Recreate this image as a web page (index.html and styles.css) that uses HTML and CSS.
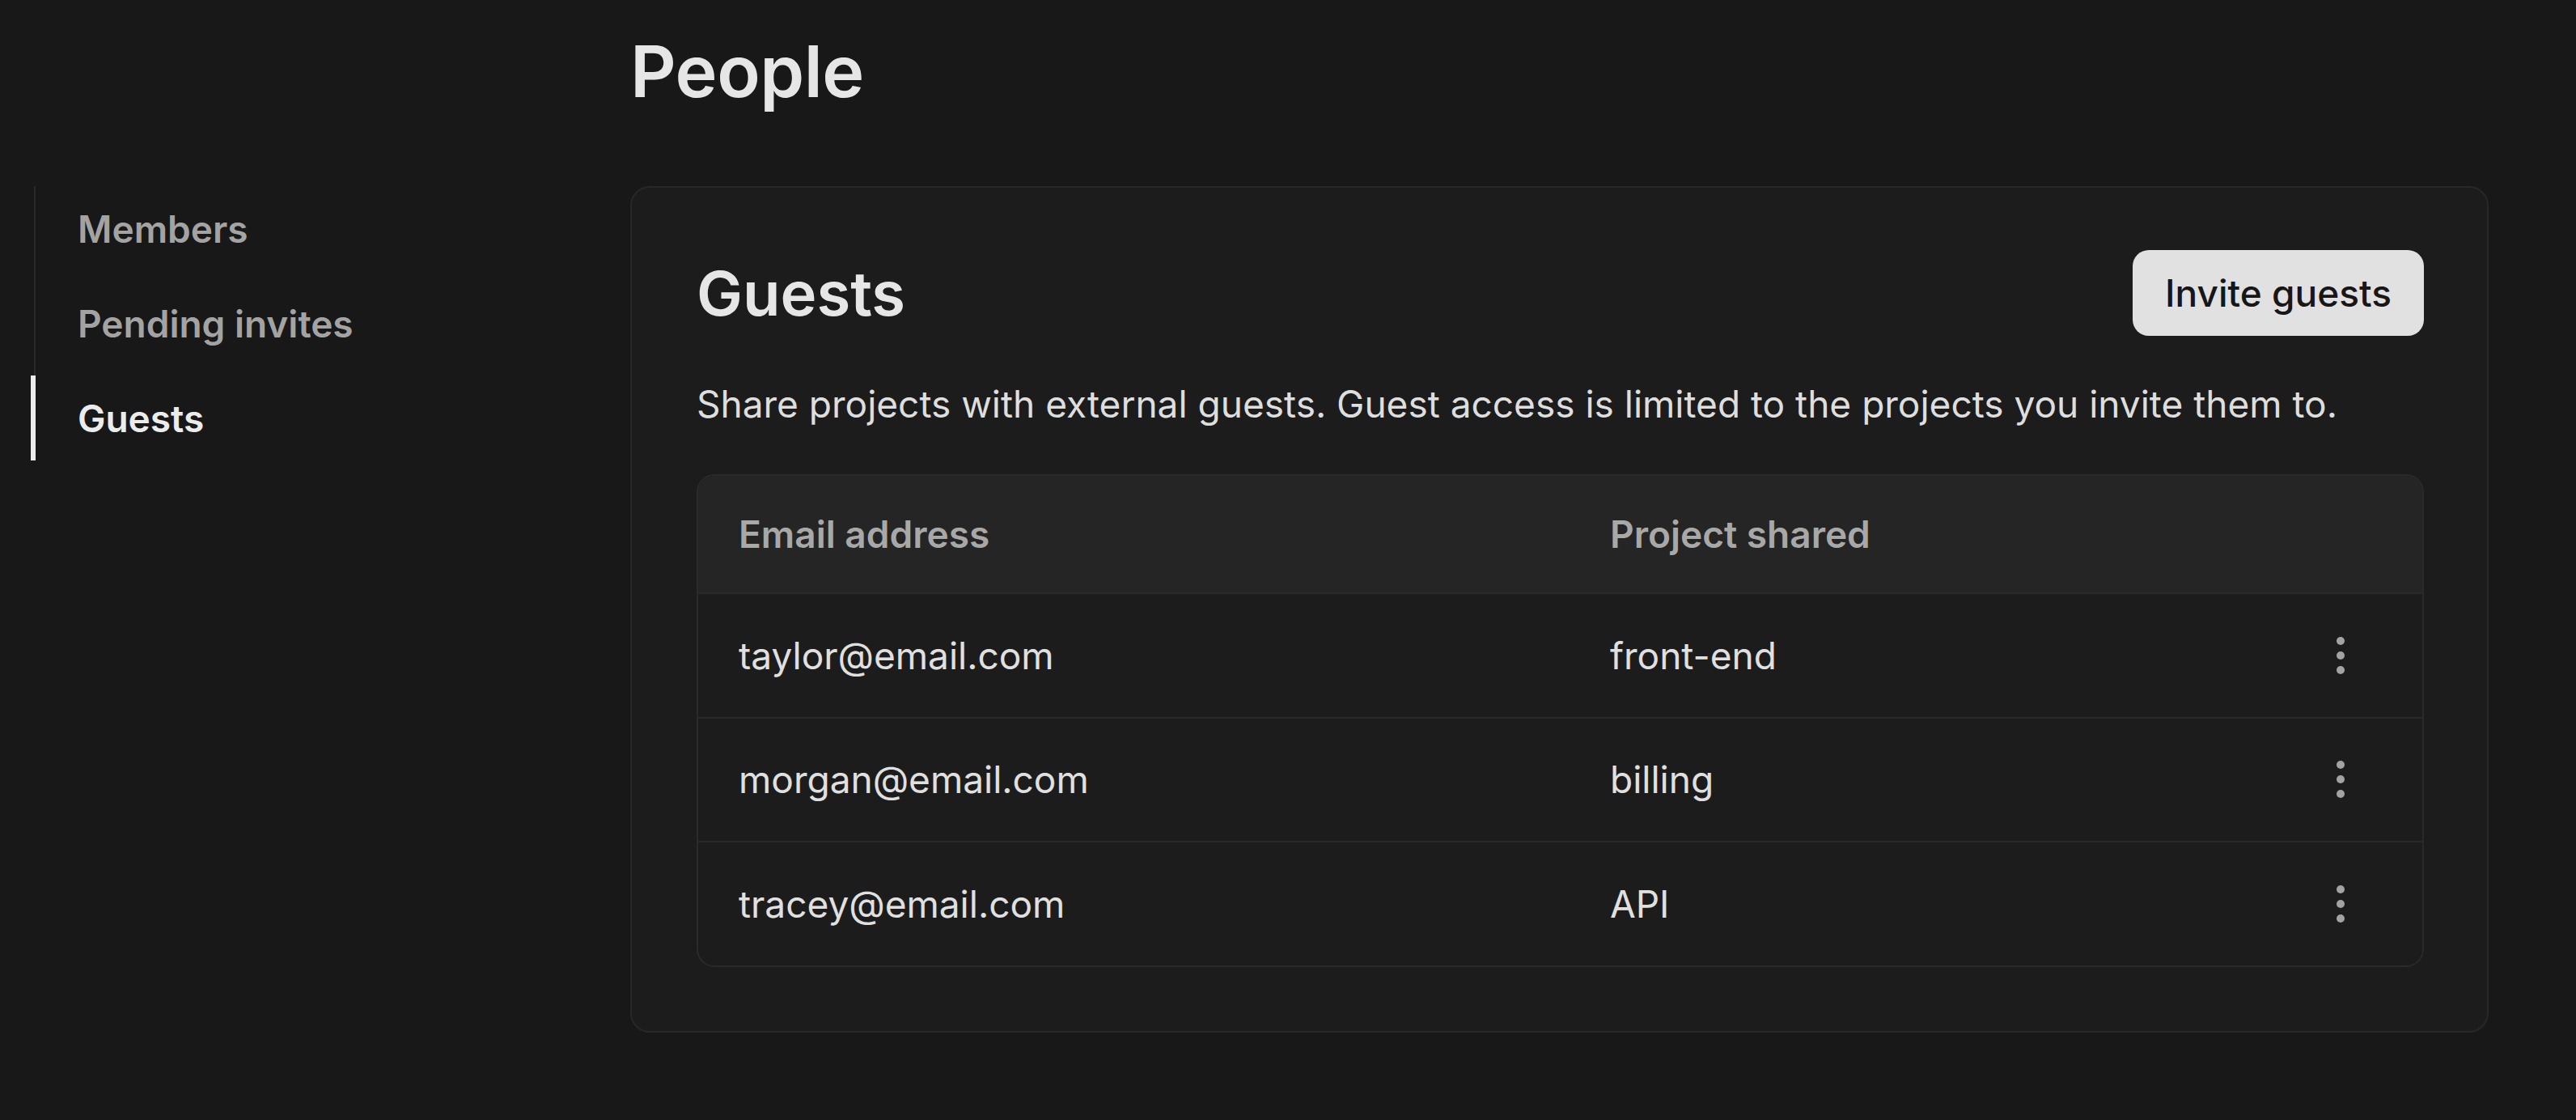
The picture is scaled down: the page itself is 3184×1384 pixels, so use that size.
FILE: index.html
```html
<!DOCTYPE html>
<html lang="en">
<head>
<meta charset="utf-8">
<title>People</title>
<link rel="stylesheet" href="styles.css">
</head>
<body>
<div class="page">
  <h1 class="page-title">People</h1>
  <nav class="side-nav">
    <a class="nav-item" href="#">Members</a>
    <a class="nav-item" href="#">Pending invites</a>
    <a class="nav-item active" href="#">Guests</a>
  </nav>
  <section class="card">
    <div class="card-head">
      <h2 class="card-title">Guests</h2>
      <button class="btn" type="button">Invite guests</button>
    </div>
    <p class="card-desc">Share projects with external guests. Guest access is limited to the projects you invite them to.</p>
    <div class="table">
      <div class="t-row t-head">
        <div class="cell">Email address</div>
        <div class="cell">Project shared</div>
        <div class="cell"></div>
      </div>
      <div class="t-row t-body">
        <div class="cell">taylor@email.com</div>
        <div class="cell">front-end</div>
        <div class="cell cell-menu"><svg class="kebab" width="10" height="46" viewBox="0 0 10 46"><circle cx="5" cy="5" r="5"/><circle cx="5" cy="23" r="5"/><circle cx="5" cy="41" r="5"/></svg></div>
      </div>
      <div class="t-row t-body">
        <div class="cell">morgan@email.com</div>
        <div class="cell">billing</div>
        <div class="cell cell-menu"><svg class="kebab" width="10" height="46" viewBox="0 0 10 46"><circle cx="5" cy="5" r="5"/><circle cx="5" cy="23" r="5"/><circle cx="5" cy="41" r="5"/></svg></div>
      </div>
      <div class="t-row t-body">
        <div class="cell">tracey@email.com</div>
        <div class="cell">API</div>
        <div class="cell cell-menu"><svg class="kebab" width="10" height="46" viewBox="0 0 10 46"><circle cx="5" cy="5" r="5"/><circle cx="5" cy="23" r="5"/><circle cx="5" cy="41" r="5"/></svg></div>
      </div>
    </div>
  </section>
</div>
</body>
</html>
```
FILE: styles.css
```css
* {
  box-sizing: border-box;
}

html, body {
  margin: 0;
  padding: 0;
  background: #181818;
}

body {
  font-family: Inter, "Noto Sans", "Liberation Sans", sans-serif;
  color: #e2e2e2;
}

.page {
  display: grid;
  grid-template-columns: 741px 2297px;
  grid-template-rows: auto auto;
  padding: 33px 0 0 38px;
}

.page-title {
  grid-column: 2;
  grid-row: 1;
  margin: 0 0 87px 0;
  font-size: 88px;
  line-height: 110px;
  font-weight: 600;
  color: #e6e6e6;
  letter-spacing: -0.5px;
}

.side-nav {
  grid-column: 1;
  grid-row: 2;
  align-self: start;
  display: flex;
  flex-direction: column;
  gap: 12px;
  margin-left: 4px;
  border-left: 2px solid #2a2a2a;
}

.nav-item {
  position: relative;
  display: flex;
  align-items: center;
  height: 105px;
  padding-left: 52px;
  font-size: 46px;
  font-weight: 600;
  color: #a3a3a3;
  text-decoration: none;
}

.nav-item.active {
  color: #ececec;
}

.nav-item.active::before {
  content: "";
  position: absolute;
  left: -6px;
  top: 0;
  bottom: 0;
  width: 6px;
  background: #ececec;
}

.card {
  grid-column: 2;
  grid-row: 2;
  background: #1c1c1c;
  border: 2px solid #282828;
  border-radius: 24px;
  padding: 77px 78px 79px 80px;
}

.card-head {
  display: flex;
  align-items: center;
  justify-content: space-between;
}

.card-title {
  margin: 0;
  font-size: 76px;
  line-height: 92px;
  font-weight: 600;
  color: #e6e6e6;
}

.btn {
  height: 106px;
  padding: 0 40px;
  border: none;
  border-radius: 20px;
  background: #e1e1e1;
  color: #171717;
  font-family: inherit;
  font-size: 46px;
  font-weight: 500;
}

.card-desc {
  margin: 51px 0 54px 0;
  font-size: 46px;
  line-height: 66px;
  color: #dedede;
}

.table {
  border: 2px solid #2a2a2a;
  border-radius: 22px;
  overflow: hidden;
}

.t-row {
  display: grid;
  grid-template-columns: 1077px 1fr 202px;
  align-items: center;
}

.t-head {
  height: 144px;
  background: #252525;
  font-weight: 600;
  color: #a8a8a8;
}

.t-body {
  height: 153.5px;
  border-top: 2px solid #2a2a2a;
  color: #e0e0e0;
}

.cell {
  padding-left: 50px;
  font-size: 46px;
  line-height: 60px;
}

.cell-menu {
  padding-left: 0;
  display: flex;
  justify-content: center;
  align-items: center;
}

.kebab {
  display: block;
  fill: #a3a3a3;
}
```
